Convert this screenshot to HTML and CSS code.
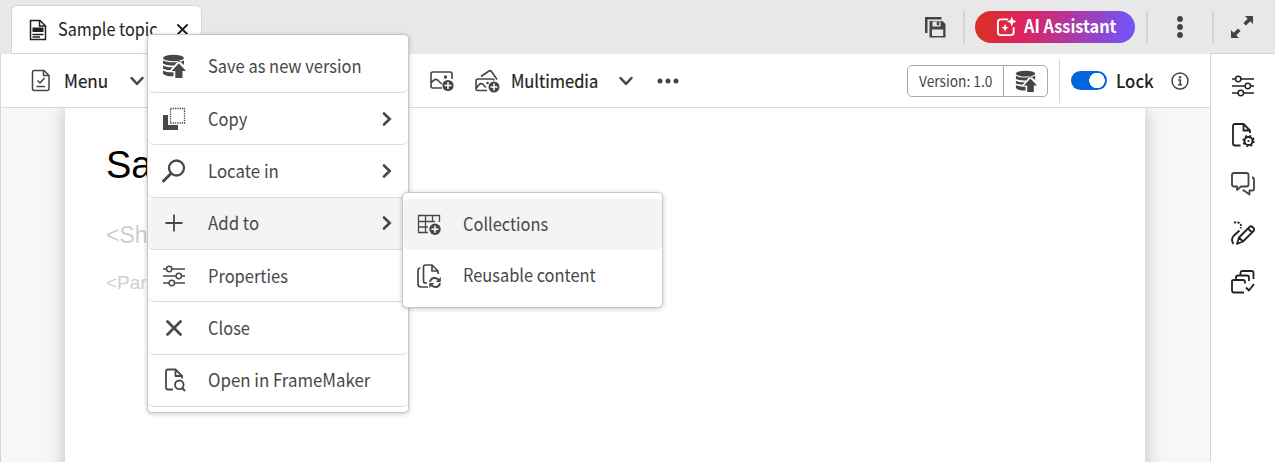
FILE: index.html
```html
<!DOCTYPE html>
<html lang="en">
<head>
<meta charset="utf-8">
<title>Sample topic</title>
<link rel="stylesheet" href="styles.css">
</head>
<body>
<svg class="defs" width="0" height="0">
  <symbol id="dbup" viewBox="0 0 24 24"><g fill="currentColor"><ellipse cx="11.500" cy="4" rx="10.500" ry="3.200"/><path d="M1 6.200C4.500 9 18.500 9 22 6.200V11L16.800 6.600L12.200 11.400C8 11.700 3 11.200 1 9.600Z"/><path d="M1 11.600C3.500 13 7 13.500 10.700 13.300L8.200 16C5.500 16 2.500 15.500 1 14.400Z"/><path d="M1 16.400C3.500 17.900 6.500 18.300 11.500 18.200V22.300C7 22.500 2.500 21.500 1 19.700Z"/><path d="M16.800 9.200L24 17H20.500V24H13.300V17H9.700Z"/></g></symbol>
  <symbol id="sliders" viewBox="0 0 24 24"><g fill="none" stroke="currentColor" stroke-width="1.500"><path d="M1 5H4.500M10 5H23M1 12H14M19.500 12H23M1 19H7M12.500 19H23"/><circle cx="7.200" cy="5" r="2.700"/><circle cx="16.800" cy="12" r="2.700"/><circle cx="9.800" cy="19" r="2.700"/></g></symbol>
  <symbol id="right" viewBox="0 0 12 16"><path d="M3 2.500L8.700 8L3 13.500" fill="none" stroke="currentColor" stroke-width="2.600" stroke-linecap="round"/></symbol>
  <symbol id="down" viewBox="0 0 16 12"><path d="M2.500 3L8 8.800L13.500 3" fill="none" stroke="currentColor" stroke-width="2.500" stroke-linecap="round" stroke-linejoin="round"/></symbol>
  <symbol id="x" viewBox="0 0 20 20"><path d="M3 3L17 17M17 3L3 17" stroke="currentColor" stroke-width="3" stroke-linecap="round"/></symbol>
</svg>
<div class="app">
  <header class="tabs">
    <div class="tab">
      <svg class="doc-icon" viewBox="0 0 18 22"><path d="M1.500 1.500H11L16.500 7V20.500H1.500Z" fill="#fff" stroke="#222" stroke-width="1.500"/><path d="M10.500 1.500V7H16.500" fill="none" stroke="#222" stroke-width="1.500"/><path d="M3.500 8.500H14.500V13H3.500Z" fill="#222"/><path d="M3.500 15.500H14.500M3.500 18H11" stroke="#222" stroke-width="1.300"/></svg>
      <span>Sample topic</span>
      <svg class="tab-close" viewBox="0 0 20 20"><use href="#x"/></svg>
    </div>
    <div class="actions">
      <svg class="save" viewBox="0 0 24 24"><path d="M1 17V1H17.500V3.500H3.500V17Z" fill="#444"/><path d="M5.500 5H18.500L21.500 8V21.500H5.500Z" fill="#444"/><path d="M8.500 5.500H16.500V10.500H8.500Z M8 13.500H19.200V20H8Z" fill="#e8e8e8"/><path d="M12.700 5.500H15.300V9.200H12.700Z" fill="#444"/></svg>
      <i class="bar bar-a"></i>
      <div class="ai">
        <svg viewBox="0 0 22 22"><path d="M12 3.500H5Q2 3.500 2 6.500V17Q2 20 5 20H15.500Q18.500 20 18.500 17V12.500" fill="none" stroke="#fff" stroke-width="2" stroke-linecap="round"/><path d="M16.500 .5L18 4.300L21.500 5.800L18 7.300L16.500 11L15 7.300L11.300 5.800L15 4.300ZM9.500 8L10.700 11.200L13.500 12.300L10.700 13.400L9.500 16.500L8.300 13.400L5.500 12.300L8.300 11.200Z" fill="#fff"/></svg>
        <span>AI Assistant</span>
      </div>
      <i class="bar bar-b"></i>
      <svg class="dots-v" viewBox="0 0 8 24"><g fill="#444"><circle cx="4" cy="4" r="2.900"/><circle cx="4" cy="12" r="2.900"/><circle cx="4" cy="20" r="2.900"/></g></svg>
      <i class="bar bar-c"></i>
      <svg class="expand" viewBox="0 0 24 24"><path d="M15 1H23V9L20.300 6.300L16 10.600L13.400 8L17.700 3.700ZM1 15V23H9L6.300 20.300L10.600 16L8 13.400L3.700 17.700Z" fill="#444"/></svg>
    </div>
  </header>
  <div class="body">
    <main class="editor">
      <div class="toolbar">
        <svg class="menu-icon" viewBox="0 0 20 23"><g fill="none" stroke="#444" stroke-width="1.500" stroke-linejoin="round"><path d="M3.500 1.500H13L18 6.500V19.500Q18 21.500 16 21.500H3.500Q1.500 21.500 1.500 19.500V3.500Q1.500 1.500 3.500 1.500Z"/><path d="M12.500 1.500V6.500H18M6.500 11.500L9 14L13.500 9M5.500 17.500H14"/></g></svg>
        <span class="menu-label">Menu</span>
        <svg class="chev menu-chev"><use href="#down"/></svg>
        <svg class="image-icon" viewBox="0 0 24 22"><g fill="none" stroke="#444" stroke-width="1.600"><path d="M12 18H3Q1 18 1 16V4Q1 2 3 2H20Q22 2 22 4V9M1 13Q6 6.500 9 11.500L12 14"/></g><circle cx="15.500" cy="7" r="1.700" fill="#444"/><circle cx="18" cy="15.500" r="5.600" fill="#444"/><path d="M18 12V19M14.500 15.500H21.500" stroke="#fff" stroke-width="1.500"/></svg>
        <svg class="media-icon" viewBox="0 0 25 24"><g fill="none" stroke="#444" stroke-width="1.600"><path d="M12 21.500H3Q1 21.500 1 19.500V12Q1 10 3 10H17Q19 10 19 11.500M6 7.500L14 2Q15.500 1 16.500 2.500L22 10.500M1.500 19Q6 11.500 9 16.500L11 18.500"/></g><circle cx="12.500" cy="14" r="1.300" fill="#444"/><circle cx="19" cy="18" r="5.500" fill="#444"/><path d="M19 14.500V21.500M15.500 18H22.500" stroke="#fff" stroke-width="1.500"/></svg>
        <span class="media-label">Multimedia</span>
        <svg class="chev media-chev"><use href="#down"/></svg>
        <svg class="dots-h" viewBox="0 0 22 6"><g fill="#444"><circle cx="3" cy="3" r="2.500"/><circle cx="11" cy="3" r="2.500"/><circle cx="19" cy="3" r="2.500"/></g></svg>
        <div class="lock-group">
          <div class="version"><div class="number"><span>Version: 1.0</span></div><b><svg><use href="#dbup"/></svg></b></div>
          <i class="lock-bar"></i>
          <i class="switch"></i>
          <span class="lock">Lock</span>
          <svg class="info" viewBox="0 0 18 18"><circle cx="9" cy="9" r="8" fill="none" stroke="#444" stroke-width="1.500"/><circle cx="9" cy="5.300" r="1.200" fill="#444"/><path d="M7.200 8H9.300V12.500M7 12.800H11" fill="none" stroke="#444" stroke-width="1.600"/></svg>
        </div>
      </div>
      <div class="canvas">
        <article class="page">
          <h1>Sam</h1>
          <p class="short">&lt;Sh</p>
          <p class="para">&lt;Para</p>
        </article>
      </div>
    </main>
    <aside class="rail">
      <svg viewBox="0 0 24 24"><use href="#sliders"/></svg>
      <svg viewBox="0 0 24 24"><g fill="none" stroke="#222" stroke-width="1.800"><path d="M9.500 22.500H4Q2 22.500 2 20.500V3Q2 1 4 1H12.500L19 7.500V10M12.500 1V7.500H19" stroke-linejoin="round"/><circle cx="17.500" cy="18" r="4.100" stroke-width="2"/><circle cx="17.500" cy="18" r="5.400" stroke-width="1.500" stroke-dasharray="2.120"/></g><circle cx="17.500" cy="18" r="1.100" fill="#222"/></svg>
      <svg viewBox="0 0 24 24"><g fill="none" stroke="#444" stroke-width="1.800" stroke-linejoin="round"><path d="M3 1H15.500Q17.500 1 17.500 3V12.500Q17.500 14.500 15.500 14.500H10L6 18V14.500H3Q1 14.500 1 12.500V3Q1 1 3 1Z"/><path d="M21 5.500Q23 5.500 23 8V17Q23 18.500 21 18.500H18.500V22.500L13 18.500H11.500"/></g></svg>
      <svg viewBox="0 0 24 24"><g fill="none" stroke="#222" stroke-width="1.800" stroke-linejoin="round"><path d="M3 1.500C8 .5 11.500 3 9.500 7.500" stroke-dasharray="2.200 1.200"/><path d="M8.500 9.500L2.500 15Q-.5 19 2.500 23"/><path d="M6 23L8 16.500L18.500 6Q20 4.500 21.500 6L22.500 7Q24 8.500 22.500 10L12 20.500ZM8 16.500L12 20.500M17 7.500L21 11.500"/></g></svg>
      <svg viewBox="0 0 24 24"><g fill="none" stroke="#222" stroke-width="1.800" stroke-linejoin="round"><path d="M13 22.500H3Q1 22.500 1 20.500V11.500Q1 10 3 10H12Q14 10 14 12V13.500M5 9V7Q5 5.500 7 5.500H16Q18 5.500 18 7.500V11M9.500 4.500V3Q9.500 1 11.500 1H20.500Q22.500 1 22.500 3V9M15 17.500L18 20.500L23 14"/></g></svg>
    </aside>
  </div>
  <nav class="popup context">
    <div class="item"><svg class="ic"><use href="#dbup"/></svg><span>Save as new version</span></div>
    <div class="item"><svg class="ic" viewBox="0 0 24 24"><path d="M1 8H6V18H16V23H1Z" fill="#484848"/><path d="M8.500 1.500H22.500V16H8.500Z" fill="none" stroke="#484848" stroke-width="1.300" stroke-dasharray="1.300 1"/></svg><span>Copy</span><svg class="arrow"><use href="#right"/></svg></div>
    <div class="item wide"><svg class="ic" viewBox="0 0 24 24"><circle cx="14.500" cy="9" r="7.500" fill="none" stroke="#484848" stroke-width="2.300"/><path d="M9 14.500L1.500 22" stroke="#484848" stroke-width="3" stroke-linecap="round"/></svg><span>Locate in</span><svg class="arrow"><use href="#right"/></svg></div>
    <div class="item active wide"><svg class="ic" viewBox="0 0 24 24"><path d="M12 3.500V20.500M3.500 12H20.500" stroke="#484848" stroke-width="1.800"/></svg><span>Add to</span><svg class="arrow"><use href="#right"/></svg></div>
    <div class="item"><svg class="ic"><use href="#sliders"/></svg><span>Properties</span></div>
    <div class="item"><svg class="ic" viewBox="-2 -2 24 24"><path d="M3.500 3.500L16.500 16.500M16.500 3.500L3.500 16.500" stroke="#484848" stroke-width="2.700" stroke-linecap="round"/></svg><span>Close</span></div>
    <div class="item wide"><svg class="ic" viewBox="0 0 24 24"><g fill="none" stroke="#484848" stroke-width="1.800" stroke-linejoin="round"><path d="M11 21.500H6Q4 21.500 4 19.500V3.500Q4 1.500 6 1.500H13.500L20 8V10.500M13.500 1.500V8H20"/><circle cx="17.300" cy="16.800" r="4.300"/><path d="M20.200 20L23 23" stroke-width="2"/></g></svg><span>Open in FrameMaker</span></div>
  </nav>
  <nav class="popup submenu">
    <div class="item active"><svg class="ic" viewBox="0 0 24 24"><path d="M11 19.500H1.500V2.500H22.500V9M1.500 8.500H18M1.500 14H11M8.500 2.500V19.500M15.500 2.500V9" fill="none" stroke="#484848" stroke-width="1.300"/><circle cx="18" cy="16.300" r="5.700" fill="#484848"/><path d="M18 12.800V19.800M14.500 16.300H21.500" stroke="#fff" stroke-width="1.500"/></svg><span>Collections</span></div>
    <div class="item"><svg class="ic" viewBox="0 0 24 24"><g fill="none" stroke="#484848" stroke-width="1.700" stroke-linejoin="round"><path d="M3.500 4Q1 4 1 7V20Q1 23 4 23H11M10 19H8.500Q6.500 19 6.500 17V3Q6.500 1 8.500 1H15L21 7V10M15 1V7H21"/><path d="M13 18Q14 13.500 18 14Q20.500 14 22 16.500M23 19Q22 23.500 18 23Q15.500 23 14 20.500" stroke-width="2"/></g><path d="M23.800 13V18H18.800ZM12.300 24V19H17.300Z" fill="#484848"/></svg><span>Reusable content</span></div>
  </nav>
</div>
</body>
</html>
```
FILE: styles.css
```css
* { box-sizing: border-box; }
body { margin: 0; font: 18px/24px "Noto Sans CJK SC", "Noto Sans", sans-serif; color: #222; }
svg { display: block; flex: none; }
span { white-space: nowrap; transform: scaleX(.915); transform-origin: left; }
.defs { position: absolute; }
.app { position: relative; width: 1275px; height: 462px; overflow: hidden; display: flex; flex-direction: column; background: #fff; }
.tabs { height: 54px; flex: none; background: #e8e8e8; display: flex; justify-content: space-between; align-items: flex-start; padding: 5px 21px 0 11px; }
.tab { width: 191px; height: 49px; border: 1px solid #d5d5d5; border-radius: 6px 6px 0 0; background: #fff; display: flex; align-items: center; padding-left: 17px; }
.doc-icon { width: 18px; height: 22px; margin-right: 11px; }
.tab span { width: 101px; padding-bottom: 3px; transform: scaleX(.9); }
.tab-close { width: 13px; height: 13px; margin-left: 17px; }
.actions { display: flex; align-items: center; height: 44px; }
.save { width: 24px; height: 24px; margin-top: 1px; }
.bar { width: 2px; height: 32px; background: #d3d3d3; }
.bar-a { margin: 0 10px 0 15px; }
.ai { width: 160px; height: 32px; border-radius: 16px; background: linear-gradient(100deg, #d92f27 5%, #de2360 32%, #7552f5 94%); display: flex; align-items: center; color: #fff; font-weight: 700; padding-left: 21px; }
.ai svg { width: 21px; height: 21px; margin-right: 7px; margin-bottom: 2px; }
.ai span { padding-bottom: 4px; transform: scaleX(.905); }
.bar-b { margin: 0 28px 0 11px; }
.dots-v { width: 8px; height: 24px; }
.bar-c { margin: 0 16px 0 28px; }
.expand { width: 24px; height: 24px; }
.body { display: flex; flex: 1; min-height: 0; border-left: 1px solid #d5d5d5; }
.editor { width: 1209px; display: flex; flex-direction: column; }
.toolbar { height: 54px; flex: none; border-bottom: 1px solid #d9d9d9; display: flex; align-items: center; padding-left: 30px; }
.menu-icon { width: 20px; height: 23px; }
.menu-label { width: 45px; margin-left: 13px; transform: scaleX(.95); }
.menu-label, .media-label { -webkit-text-stroke: .2px #222; padding-bottom: 1px; }
.chev { width: 16px; height: 12px; color: #444; }
.menu-chev { margin-left: 20px; }
.image-icon { width: 24px; height: 22px; margin: 1px 0 0 285px; }
.media-icon { width: 25px; height: 24px; margin-left: 21px; }
.media-label { width: 88px; margin-left: 11px; }
.media-chev { margin-left: 19px; }
.dots-h { width: 22px; height: 6px; margin-left: 23px; }
.lock-group { margin-left: auto; display: flex; align-items: center; padding-right: 21px; }
.version { width: 141px; height: 32px; border: 1px solid #aaa; border-radius: 5px; display: flex; font-size: 15px; line-height: 29px; color: #444; }
.number { width: 96px; padding-left: 11px; border-right: 1px solid #aaa; }
.number span { display: block; }
.version b { flex: 1; display: flex; align-items: center; justify-content: center; }
.version svg { width: 22px; height: 22px; }
.lock-bar { width: 1px; height: 44px; background: #d5d5d5; margin: 0 11px; }
.switch { width: 36px; height: 19px; border-radius: 10px; background: radial-gradient(circle at 26px 9.500px, #fff 7.500px, #0265dc 8px); }
.lock { width: 38px; margin-left: 9px; font-weight: 500; transform: scaleX(.93); padding-bottom: 1px; }
.info { width: 18px; height: 18px; margin-left: 17px; }
.canvas { flex: 1; background: #f7f7f7; padding-left: 64px; overflow: hidden; }
.page { width: 1080px; height: 380px; background: #fff; box-shadow: 0 0 18px rgba(0,0,0,.22); padding: 34px 41px; font-family: "Liberation Sans", Arial, sans-serif; }
.page h1 { margin: 0; font-size: 38px; line-height: 46px; font-weight: 400; color: #000; }
.page p { margin: 0; color: #cfcfcf; }
.short { font-size: 23px; line-height: 28px; padding-top: 33px; }
.para { font-size: 19px; line-height: 24px; padding-top: 22px; }
.rail { flex: 1; border-left: 1px solid #d5d5d5; border-top: 1px solid #d5d5d5; margin-top: -1px; padding: 20px 0 0 20px; display: flex; flex-direction: column; gap: 25px; color: #222; }
.rail svg { width: 24px; height: 24px; }
.popup { position: absolute; background: #fff; border: 1px solid #c8c8c8; border-radius: 5px; box-shadow: 0 1px 5px rgba(0,0,0,.22); color: #484848; }
.context { left: 147px; top: 34px; width: 262px; height: 379px; padding-top: 5.700px; }
.item { height: 52.330px; border-bottom: 1px solid #dcdcdc; border-radius: 6px; display: flex; align-items: center; padding: 0 15px 0 14px; }
.item span { padding-bottom: 2px; }
.item.wide span { transform: scaleX(.935); }
.item.active { background: #f4f4f4; }
.ic { width: 24px; height: 24px; margin-right: 22px; }
.arrow { width: 12px; height: 16px; margin-left: auto; }
.submenu { left: 402px; top: 192px; width: 261px; height: 116px; padding-top: 6px; }
.submenu .item { height: 51px; border-bottom: 0; }
.submenu .item span { padding-bottom: 3px; transform: scaleX(.91); }
```
